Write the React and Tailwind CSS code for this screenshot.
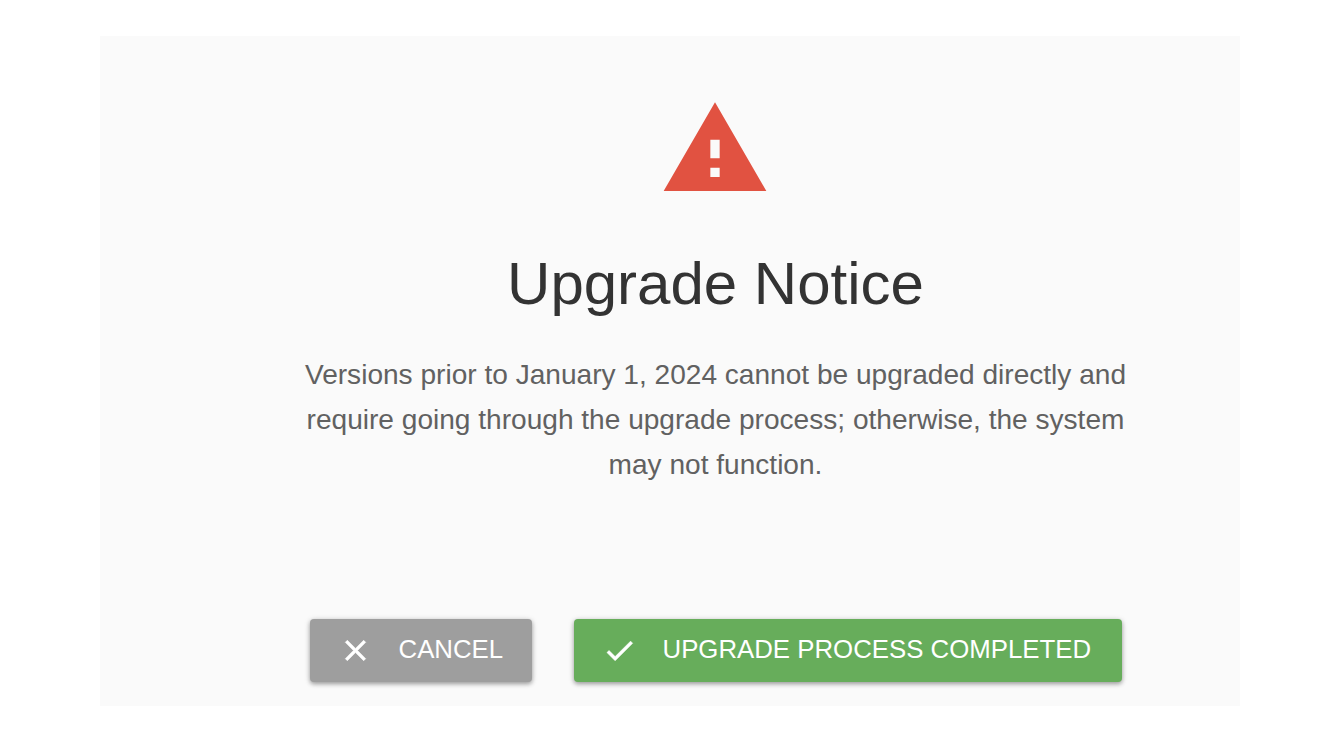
import React from 'react';

const icons = {
  warning: "M1 21h22L12 2 1 21zm12-3h-2v-2h2v2zm0-4h-2v-4h2v4z",
  close: "M19 6.41L17.59 5 12 10.59 6.41 5 5 6.41 10.59 12 5 17.59 6.41 19 12 13.41 17.59 19 19 17.59 13.41 12z",
  check: "M9 16.17L4.83 12l-1.42 1.41L9 19 21 7l-1.41-1.41z",
};

const Icon = ({ name, className }) => (
  <svg viewBox="0 0 24 24" fill="currentColor" className={className}>
    <path d={icons[name]} />
  </svg>
);

const Button = ({ icon, className, children }) => (
  <button
    className={`flex items-center h-[63px] pl-7 rounded-[4px] text-white text-[25.8px] uppercase whitespace-nowrap shadow-[0_2px_4px_rgba(0,0,0,0.3),0_1px_6px_rgba(0,0,0,0.15)] ${className}`}
  >
    <Icon name={icon} className="w-[35px] h-[35px] mr-[26px] shrink-0 stroke-current stroke-[0.4]" />
    <span className="leading-none -mt-0.5">{children}</span>
  </button>
);

const App = () => {
  return (
    <div className="h-[750px] bg-white pt-9 font-['Liberation_Sans',Arial,sans-serif]">
      <div className="w-[1140px] h-[670px] ml-[100px] pl-[91px] bg-[#fafafa] flex flex-col items-center">
        <Icon name="warning" className="w-[112px] h-[112px] mt-[57px] mr-px shrink-0 text-[#e15241]" />
        <h1 className="mt-[44px] text-[60px] leading-[70px] text-[#333333]">Upgrade Notice</h1>
        <p className="mt-[33px] w-[840px] text-center text-[28.08px] leading-[45px] text-[#616161]">
          Versions prior to January 1, 2024 cannot be upgraded directly and
          require going through the upgrade process; otherwise, the system
          may not function.
        </p>

        {/* Actions */}
        <div className="flex gap-[42px] mt-[132px]">
          <Button icon="close" className="w-[222px] bg-[#9e9e9e]">Cancel</Button>
          <Button icon="check" className="w-[548px] bg-[#67ad5b]">Upgrade process completed</Button>
        </div>
      </div>
    </div>
  );
};

export default App;
